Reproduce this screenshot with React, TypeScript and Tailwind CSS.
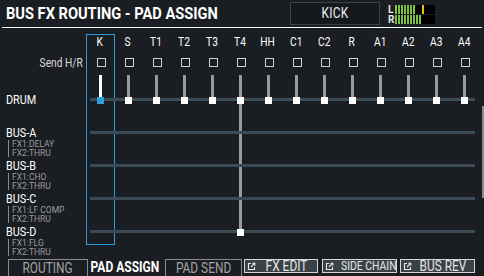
import React from "react";

const cols = ["K", "S", "T1", "T2", "T3", "T4", "HH", "C1", "C2", "R", "A1", "A2", "A3", "A4"];

const buses = [
  { name: "BUS-A", fx1: "DELAY", fx2: "THRU" },
  { name: "BUS-B", fx1: "CHO", fx2: "THRU" },
  { name: "BUS-C", fx1: "LF COMP", fx2: "THRU" },
  { name: "BUS-D", fx1: "FLG", fx2: "THRU", pad: 5 },
];

const LinkIcon = () => (
  <svg width="9" height="9" viewBox="0 0 9 9" className="shrink-0" fill="none" stroke="#e6e6e6" strokeWidth="1.1">
    <path d="M4 1.5H1.5V7.5H7.5V5" />
    <path d="M4 5L7.8 1.2" />
    <path d="M5.2 1.2H7.8V3.8" />
  </svg>
);

const Meter = ({ label, bars, peak }: { label: string; bars: number; peak?: boolean }) => (
  <div className="flex items-center h-[9px]">
    <span className="w-[7px] text-[10px] leading-[9px] font-bold text-[#e8e8e8]">{label}</span>
    <div className="flex w-[40px] h-[9px] bg-black gap-[1px]">
      {Array.from({ length: bars }).map((_, i) => (
        <div key={i} className="w-[2px] h-full bg-[#7cc242]" />
      ))}
      {peak && <div className="ml-[6px] w-[2px] h-full bg-[#f4c20d]" />}
    </div>
  </div>
);

const Handle = ({ active }: { active?: boolean }) => (
  <div className={active ? "w-[7px] h-[7px] bg-[#2d9ddc]" : "w-[7px] h-[7px] bg-white"} />
);

export default function App() {
  return (
    <div className="w-[484px] h-[276px] bg-[#1a1d21] overflow-hidden flex flex-col font-['Roboto',sans-serif]">
      {/* header */}
      <div className="h-[27px] flex items-center pl-[6px]">
        <div className="w-[284px]">
          <span className="inline-block origin-left scale-x-[0.86] text-[17px] font-bold text-white leading-none">
            BUS FX ROUTING - PAD ASSIGN
          </span>
        </div>
        <div className="w-[90px] h-[23px] border border-[#3c4246] bg-[#16191c] flex items-center justify-center">
          <span className="inline-block scale-x-[0.85] text-[14px] text-[#ececec] tracking-wide">KICK</span>
        </div>
        <div className="ml-[8px] flex flex-col gap-[1px] mt-[1px]">
          <Meter label="L" bars={7} peak />
          <Meter label="R" bars={9} />
        </div>
      </div>
      <div className="h-px bg-white mx-[2px]" />

      {/* matrix */}
      <div className="relative h-[231px]">
        <div className="absolute left-[86px] top-[6px] w-[29px] h-[211px] border border-[#2a9de0]" />
        <div className="absolute left-[239px] top-[72px] w-[3px] h-[132px] bg-[#9a9a9a]" />
        <div className="absolute right-0 top-[78px] w-[2px] h-[92px] bg-[#858a8e]" />

        <div className="mt-[6px] h-[16px] flex">
          <div className="w-[86px]" />
          <div className="grid grid-cols-[repeat(14,28px)]">
            {cols.map((c) => (
              <div key={c} className="text-center text-[12px] leading-[16px] text-white">
                <span className="inline-block scale-x-[0.85]">{c}</span>
              </div>
            ))}
          </div>
        </div>

        <div className="h-[24px] flex items-center">
          <div className="w-[86px] pr-[3px] text-right">
            <span className="inline-block origin-right scale-x-[0.85] text-[12px] text-[#dcdcdc]">Send H/R</span>
          </div>
          <div className="grid grid-cols-[repeat(14,28px)]">
            {cols.map((c) => (
              <div key={c} className="pl-[11px]">
                <div className="w-[9px] h-[9px] border border-[#cfcfcf]" />
              </div>
            ))}
          </div>
        </div>

        <div className="h-[19px] pt-[1px] flex">
          <div className="w-[86px]" />
          <div className="grid grid-cols-[repeat(14,28px)]">
            {cols.map((c, i) => (
              <div key={c} className="pl-[13px]">
                <div className={i === 0 ? "w-[3px] h-full bg-white" : "w-[3px] h-full bg-[#9a9a9a]"} />
              </div>
            ))}
          </div>
        </div>

        <div className="h-[33px] flex">
          <div className="w-[86px] pl-[6px] h-[14px] text-[12px] leading-[14px] text-white">
            <span className="inline-block origin-left scale-x-[0.9]">DRUM</span>
          </div>
          <div className="relative w-[392px] h-[14px]">
            <div className="absolute left-[4px] right-[3px] top-[5px] h-[3px] bg-[#3b4b56]" />
            <div className="relative grid grid-cols-[repeat(14,28px)] h-full">
              {cols.map((c, i) => (
                <div key={c} className="pl-[11px] flex flex-col">
                  <div className={i === 0 ? "ml-[2px] w-[3px] h-[4px] bg-white" : "ml-[2px] w-[3px] h-[4px] bg-[#9a9a9a]"} />
                  <Handle active={i === 0} />
                </div>
              ))}
            </div>
          </div>
        </div>

        {buses.map((b) => (
          <div key={b.name} className="h-[33px] flex">
            <div className="w-[86px]">
              <div className="pl-[6px] h-[14px] text-[12px] leading-[14px] text-white">
                <span className="inline-block origin-left scale-x-[0.9]">{b.name}</span>
              </div>
              <div className="ml-[8px] border-l border-[#8a8a8a] pl-[3px] text-[8.5px] leading-[8.5px] text-[#9c9c9c]">
                <div className="whitespace-nowrap">FX1:{b.fx1}</div>
                <div className="whitespace-nowrap">FX2:{b.fx2}</div>
              </div>
            </div>
            <div className="relative w-[392px] h-[14px]">
              <div className="absolute left-[4px] right-[3px] top-[5px] h-[3px] bg-[#3b4b56]" />
              <div className="relative grid grid-cols-[repeat(14,28px)] h-full items-center">
                {cols.map((c, i) => (
                  <div key={c} className="pl-[11px] pt-[1px]">
                    {b.pad === i && <Handle />}
                  </div>
                ))}
              </div>
            </div>
          </div>
        ))}
      </div>

      {/* tabs */}
      <div className="h-[17px] flex pl-[8px]">
        <div className="w-[80px] h-[17px] border-t border-x border-[#8a8a8a] flex justify-center">
          <span className="inline-block scale-x-[0.85] text-[14px] leading-[16px] text-[#a3a3a3]">ROUTING</span>
        </div>
        <div className="w-[74px] h-[17px] flex justify-center">
          <span className="inline-block scale-x-[0.8] text-[15px] leading-[16px] font-bold text-white whitespace-nowrap">PAD ASSIGN</span>
        </div>
        <div className="ml-[3px] w-[77px] h-[17px] border-t border-x border-[#8a8a8a] flex justify-center">
          <span className="inline-block scale-x-[0.85] text-[14px] leading-[16px] text-[#a3a3a3] whitespace-nowrap">PAD SEND</span>
        </div>
        <div className="ml-[2px] w-[74px] h-[14px] border border-[#d6d6d6] bg-[#3b4247] flex items-center pl-[2px]">
          <LinkIcon />
          <span className="flex-1 text-center inline-block scale-x-[0.85] text-[14px] leading-[12px] text-[#e6e6e6] whitespace-nowrap">FX EDIT</span>
        </div>
        <div className="ml-[4px] w-[75px] h-[14px] border border-[#d6d6d6] bg-[#3b4247] flex items-center pl-[2px]">
          <LinkIcon />
          <span className="flex-1 text-center inline-block scale-x-[0.8] text-[13px] leading-[12px] text-[#e6e6e6] whitespace-nowrap">SIDE CHAIN</span>
        </div>
        <div className="ml-[3px] w-[75px] h-[14px] border border-[#d6d6d6] bg-[#3b4247] flex items-center pl-[2px]">
          <LinkIcon />
          <span className="flex-1 text-center inline-block scale-x-[0.85] text-[14px] leading-[12px] text-[#e6e6e6] whitespace-nowrap">BUS REV</span>
        </div>
      </div>
    </div>
  );
}
